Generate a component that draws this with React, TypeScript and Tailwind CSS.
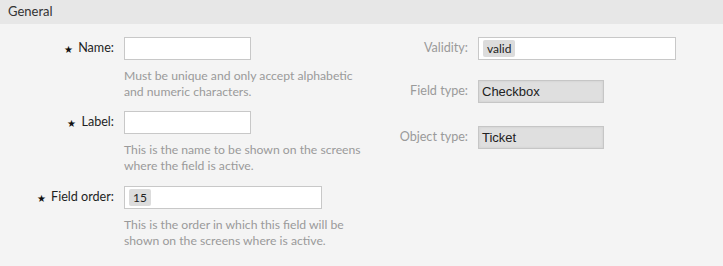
import React from "react";

const sans = { fontFamily: "Lato, 'Noto Sans', sans-serif" };

function Star() {
  return <span className="mr-[5px] text-[10px] leading-none text-[#111]">★</span>;
}

function LeftLabel({ text }: { text: string }) {
  return (
    <div className="flex h-[23px] w-[114px] shrink-0 items-center justify-end text-[12.6px] text-[#1f1f1f]">
      <Star />
      <span>{text}</span>
    </div>
  );
}

function RightLabel({ text }: { text: string }) {
  return (
    <div className="flex h-[23px] w-[107px] shrink-0 items-center justify-end text-[12.6px] text-[#9a9a9a]">
      {text}
    </div>
  );
}

function Help({ children }: { children: React.ReactNode }) {
  return <div className="mt-[8px] whitespace-nowrap text-[12.2px] leading-[16px] text-[#9a9a9a]">{children}</div>;
}

function Chip({ text }: { text: string }) {
  return (
    <span className="ml-[4px] inline-flex h-[17px] items-center rounded-[2px] bg-[#dcdcdc] px-[4px] text-[12px] text-[#222]">
      {text}
    </span>
  );
}

function Select({ text }: { text: string }) {
  return (
    <div
      className="flex h-[23px] w-[126px] items-center border border-[#c6c6c6] bg-[#dfdfdf] px-[3px] text-[13px] text-[#222] shadow-[inset_0_0_3px_rgba(0,0,0,0.08)]"
      style={{ fontFamily: "'Liberation Sans', Arial, sans-serif" }}
    >
      {text}
    </div>
  );
}

export default function App() {
  return (
    <div className="h-[266px] w-[723px] overflow-hidden bg-[#f4f4f4]" style={sans}>
      <div className="flex h-[24px] items-center bg-[#e7e7e7] px-[8px] text-[13px] text-[#333]">General</div>
      <div className="flex pt-[13px]">
        <div className="w-[361px] shrink-0">
          <div className="flex gap-[10px]">
            <LeftLabel text="Name:" />
            <div>
              <div className="h-[23px] w-[127px] border border-[#c8c8c8] bg-white" />
              <Help>
                Must be unique and only accept alphabetic
                <br />
                and numeric characters.
              </Help>
            </div>
          </div>
          <div className="mt-[11px] flex gap-[10px]">
            <LeftLabel text="Label:" />
            <div>
              <div className="h-[23px] w-[127px] border border-[#c8c8c8] bg-white" />
              <Help>
                This is the name to be shown on the screens
                <br />
                where the field is active.
              </Help>
            </div>
          </div>
          <div className="mt-[12px] flex gap-[10px]">
            <LeftLabel text="Field order:" />
            <div>
              <div className="flex h-[23px] w-[198px] items-center border border-[#c8c8c8] bg-white">
                <Chip text="15" />
              </div>
              <Help>
                This is the order in which this field will be
                <br />
                shown on the screens where is active.
              </Help>
            </div>
          </div>
        </div>
        <div className="flex-1">
          <div className="flex gap-[10px]">
            <RightLabel text="Validity:" />
            <div className="flex h-[23px] w-[198px] items-center border border-[#c8c8c8] bg-white">
              <Chip text="valid" />
            </div>
          </div>
          <div className="mt-[20px] flex gap-[10px]">
            <RightLabel text="Field type:" />
            <Select text="Checkbox" />
          </div>
          <div className="mt-[23px] flex gap-[10px]">
            <RightLabel text="Object type:" />
            <Select text="Ticket" />
          </div>
        </div>
      </div>
    </div>
  );
}
